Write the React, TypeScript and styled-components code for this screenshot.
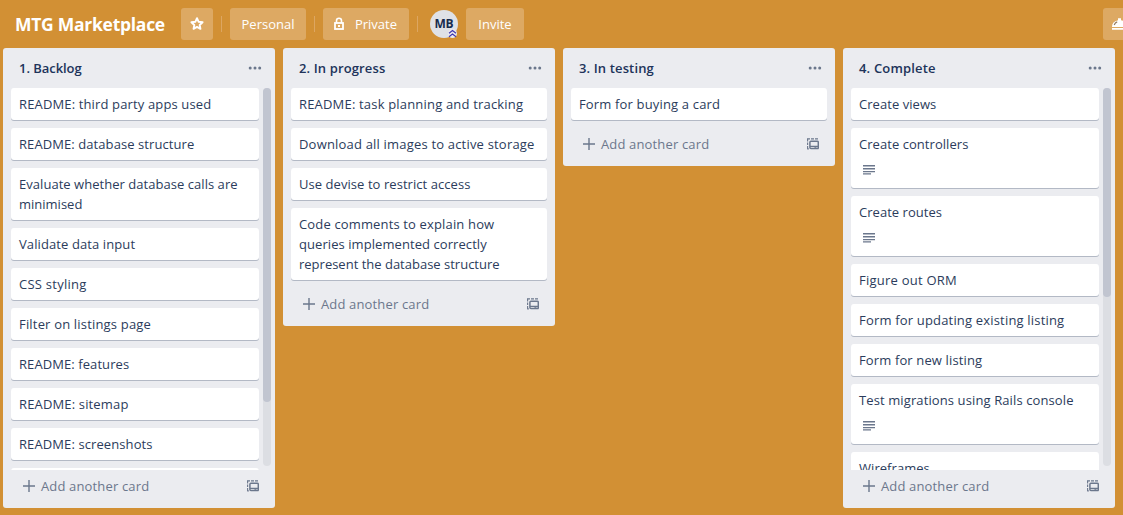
import React from "react";
import styled, { createGlobalStyle } from "styled-components";

const GlobalStyle = createGlobalStyle`
  * { box-sizing: border-box; }
  html, body { margin: 0; padding: 0; overflow: hidden; }
  body {
    background: #d29034;
    color: #172b4d;
    font-family: "Open Sans", "Noto Sans", sans-serif;
    font-size: 13px;
    line-height: 20px;
  }
  button { font: inherit; border: 0; margin: 0; padding: 0; cursor: pointer; }
  svg { display: block; flex: none; }
`;

const Page = styled.div`
  display: flex;
  flex-direction: column;
  width: 100vw;
  height: 515px;
  overflow: hidden;
`;

const Header = styled.header`
  display: flex;
  align-items: center;
  flex: none;
  height: 48px;
  padding-left: 15px;
  color: #fff;
`;

const BoardName = styled.h1`
  flex: none;
  width: 166px;
  margin: 0;
  font-size: 17.5px;
  font-weight: 700;
  letter-spacing: -0.27px;
  line-height: 32px;
  white-space: nowrap;
`;

const HeaderButton = styled.button<{ $width: number }>`
  display: flex;
  align-items: center;
  justify-content: center;
  flex: none;
  width: ${(p) => p.$width}px;
  height: 32px;
  border-radius: 3px;
  background: #dda963;
  color: #fff;
`;

const LockLabel = styled.span`
  margin-left: 10px;
  margin-right: 2px;
`;

const Divider = styled.span`
  flex: none;
  width: 1px;
  height: 16px;
  margin: 0 8px;
  background: #dda661;
`;

const Avatar = styled.div`
  position: relative;
  flex: none;
  width: 28px;
  height: 28px;
  margin: 0 8px 0 4px;
  border-radius: 50%;
  background: #dfe1e6;
  color: #172b4d;
  font-size: 12px;
  font-weight: 700;
  letter-spacing: -0.3px;
  line-height: 28px;
  text-align: center;
`;

const AdminBadge = styled.svg`
  position: absolute;
  right: 1px;
  bottom: 0;
`;

const ButlerButton = styled(HeaderButton)`
  justify-content: flex-start;
  margin-left: auto;
  margin-right: -76px;
  padding-left: 8px;
`;

const Board = styled.main`
  display: flex;
  align-items: flex-start;
  gap: 8px;
  flex: 1;
  min-height: 0;
  padding: 0 0 7px 3px;
`;

const List = styled.section`
  display: flex;
  flex-direction: column;
  flex: none;
  width: 272px;
  max-height: 100%;
  border-radius: 3px;
  background: #ebecf0;
`;

const ListHeader = styled.div`
  display: flex;
  align-items: center;
  justify-content: space-between;
  flex: none;
  height: 40px;
  padding: 0 13px 0 16px;
`;

const ListTitle = styled.h2<{ $tracking: number }>`
  margin: 0;
  color: #20335a;
  font-size: 13px;
  font-weight: 600;
  letter-spacing: ${(p) => p.$tracking}px;
  line-height: 20px;
`;

const ListBody = styled.div`
  display: flex;
  flex: 0 1 auto;
  min-height: 0;
  padding: 0 4px 0 8px;
`;

const Cards = styled.div`
  display: flex;
  flex-direction: column;
  gap: 8px;
  flex: 1;
  min-width: 0;
  overflow: hidden;
  padding-bottom: 8px;
  margin-right: 4px;
`;

const ScrollTrack = styled.div`
  flex: none;
  width: 8px;
  margin-bottom: 4px;
  border-radius: 4px;
  background: #dcdee3;
`;

const ScrollThumb = styled.div<{ $height: number }>`
  height: ${(p) => p.$height}px;
  border-radius: 4px;
  background: #c1c5d0;
`;

const CardBox = styled.article`
  flex: none;
  min-height: 32px;
  padding: 6px 8px;
  border-radius: 3px;
  background: #fff;
  box-shadow: 0 1px 0 #b3b9c5;
  color: #2b3c5c;
`;

const CardLine = styled.div<{ $tracking: number }>`
  letter-spacing: ${(p) => p.$tracking}px;
  white-space: nowrap;
`;

const CardBadge = styled.div`
  display: flex;
  height: 28px;
  padding: 10px 0 0 4px;
`;

const ListFooter = styled.div`
  display: flex;
  align-items: center;
  justify-content: space-between;
  flex: none;
  height: 38px;
  padding: 0 16px 6px 20px;
  color: #6b778c;
`;

const AddCard = styled.button`
  display: flex;
  align-items: center;
  gap: 6px;
  background: none;
  color: #6b778c;
  letter-spacing: 0.15px;
`;

const StarIcon = () => (
  <svg width="16" height="16" viewBox="0 0 16 16" fill="none" stroke="#fff" strokeWidth="1.9" strokeLinejoin="round">
    <path d="M8 2.2l1.65 3.6 3.95.45-2.9 2.7.75 3.9L8 10.95l-3.45 1.9.75-3.9-2.9-2.7 3.95-.45z" />
  </svg>
);

const LockIcon = () => (
  <svg width="12" height="14" viewBox="0 0 12 14" fill="none" stroke="#fff">
    <path d="M3.5 6V3.7a2.5 2.5 0 0 1 5 0V6" strokeWidth="1.6" />
    <rect x="2" y="6" width="8" height="6" strokeWidth="1.8" />
    <path d="M5 9h2" strokeWidth="2" />
  </svg>
);

const ChevronsIcon = () => (
  <AdminBadge width="9" height="9" viewBox="0 0 9 9">
    <circle cx="4.5" cy="4.5" r="4.5" fill="#ebe9ef" />
    <path d="M1 4.2L4.5 1.5 8 4.2M1 7.8L4.5 5.1 8 7.8" fill="none" stroke="#4038b0" strokeWidth="1.2" />
  </AdminBadge>
);

const ButlerIcon = () => (
  <svg width="18" height="14" viewBox="0 0 18 14">
    <path fill="#fff" d="M1 10a8 7 0 0 1 6-6.8V1.2h3v2A8 7 0 0 1 17 10zM1 11h16v1.7H1z" />
    <path d="M3.2 8q.8-2.4 3-3.1" fill="none" stroke="#947c62" strokeWidth="1.2" />
  </svg>
);

const DotsIcon = () => (
  <svg width="14" height="4" viewBox="0 0 14 4" fill="#6b778c">
    <circle cx="2.2" cy="2" r="1.5" />
    <circle cx="7" cy="2" r="1.5" />
    <circle cx="11.7" cy="2" r="1.5" />
  </svg>
);

const DescriptionIcon = () => (
  <svg width="12" height="11" viewBox="0 0 12 11" fill="#6b778c">
    <path d="M0 1h12v1.4H0zM0 4h12v1.4H0zM0 7h12v1.3H0zM0 9.3h8v1.2H0z" />
  </svg>
);

const PlusIcon = () => (
  <svg width="12" height="12" viewBox="0 0 12 12" stroke="#6b778c" strokeWidth="1.4">
    <path d="M6 0v12M0 6h12" />
  </svg>
);

const TemplateIcon = () => (
  <svg width="12" height="12" viewBox="0 0 12 12" fill="none" stroke="#6b778c">
    <path d="M0 .9h3M4 .9h3M8 .9h3M.6 .5v3M.6 4.4v2.6M.6 8v3M.2 10.9h1.6" strokeWidth="1.1" />
    <rect x="2.9" y="3.2" width="8.4" height="7.4" rx="1" strokeWidth="1.5" />
    <path d="M3 8.4h8M7.4 9.2h2" strokeWidth="1.1" />
  </svg>
);

/* Each line of a card is its text and its letter spacing in pixels. */
type Line = [string, number];
type CardData = { lines: Line[]; described?: boolean };
type ListData = { title: string; tracking: number; thumb?: number; cards: CardData[] };

const lists: ListData[] = [
  {
    title: "1. Backlog",
    tracking: -0.05,
    thumb: 314,
    cards: [
      { lines: [["README: third party apps used", 0.14]] },
      { lines: [["README: database structure", 0.08]] },
      { lines: [["Evaluate whether database calls are", 0.04], ["minimised", 0]] },
      { lines: [["Validate data input", 0.1]] },
      { lines: [["CSS styling", 0.25]] },
      { lines: [["Filter on listings page", 0.18]] },
      { lines: [["README: features", 0.08]] },
      { lines: [["README: sitemap", 0.15]] },
      { lines: [["README: screenshots", 0.1]] },
      { lines: [] },
    ],
  },
  {
    title: "2. In progress",
    tracking: 0.13,
    cards: [
      { lines: [["README: task planning and tracking", 0.18]] },
      { lines: [["Download all images to active storage", 0.19]] },
      { lines: [["Use devise to restrict access", 0.06]] },
      {
        lines: [
          ["Code comments to explain how", 0.15],
          ["queries implemented correctly", 0.07],
          ["represent the database structure", 0],
        ],
      },
    ],
  },
  { title: "3. In testing", tracking: 0.13, cards: [{ lines: [["Form for buying a card", 0.16]] }] },
  {
    title: "4. Complete",
    tracking: 0.18,
    thumb: 209,
    cards: [
      { lines: [["Create views", 0.05]] },
      { lines: [["Create controllers", 0.05]], described: true },
      { lines: [["Create routes", 0.04]], described: true },
      { lines: [["Figure out ORM", 0.24]] },
      { lines: [["Form for updating existing listing", 0.18]] },
      { lines: [["Form for new listing", 0.13]] },
      { lines: [["Test migrations using Rails console", 0.11]], described: true },
      { lines: [["Wireframes", 0.05]] },
    ],
  },
];

const Card = ({ lines, described }: CardData) => (
  <CardBox>
    {lines.map(([text, tracking]) => (
      <CardLine key={text} $tracking={tracking}>{text}</CardLine>
    ))}
    {described && (
      <CardBadge>
        <DescriptionIcon />
      </CardBadge>
    )}
  </CardBox>
);

export default function App() {
  return (
    <Page>
      <GlobalStyle />
      <Header>
        <BoardName>MTG Marketplace</BoardName>
        <HeaderButton $width={32} aria-label="Star board"><StarIcon /></HeaderButton>
        <Divider />
        <HeaderButton $width={76}>Personal</HeaderButton>
        <Divider />
        <HeaderButton $width={86}>
          <LockIcon />
          <LockLabel>Private</LockLabel>
        </HeaderButton>
        <Divider />
        <Avatar>
          MB
          <ChevronsIcon />
        </Avatar>
        <HeaderButton $width={58}>Invite</HeaderButton>
        <ButlerButton $width={96} aria-label="Butler"><ButlerIcon /></ButlerButton>
      </Header>
      <Board>
        {lists.map((list) => (
          <List key={list.title}>
            <ListHeader>
              <ListTitle $tracking={list.tracking}>{list.title}</ListTitle>
              <DotsIcon />
            </ListHeader>
            <ListBody>
              <Cards>
                {list.cards.map((card, i) => <Card key={i} {...card} />)}
              </Cards>
              {list.thumb && (
                <ScrollTrack>
                  <ScrollThumb $height={list.thumb} />
                </ScrollTrack>
              )}
            </ListBody>
            <ListFooter>
              <AddCard><PlusIcon />Add another card</AddCard>
              <TemplateIcon />
            </ListFooter>
          </List>
        ))}
      </Board>
    </Page>
  );
}
